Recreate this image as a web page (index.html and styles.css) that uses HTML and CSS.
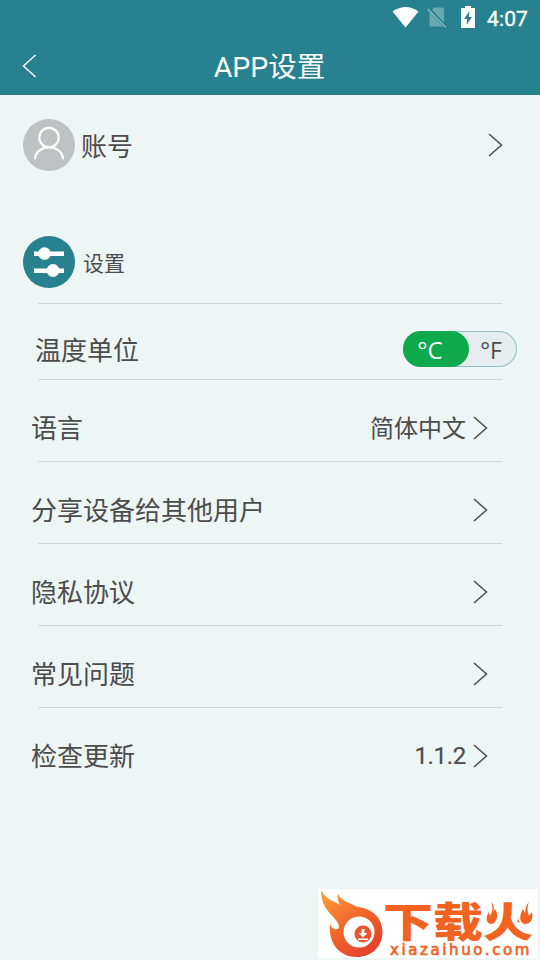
FILE: index.html
```html
<!DOCTYPE html>
<html lang="zh-CN">
<head>
<meta charset="utf-8">
<meta name="viewport" content="width=device-width">
<title>APP设置</title>
<link rel="stylesheet" href="styles.css">
</head>
<body>
<header class="header">
  <div class="status">
    <svg class="wifi" width="27" height="21" viewBox="0 0 27 21"><path d="M0.500 4.500Q13.500-4.500 26.500 4.500L13.500 20.500Z" fill="#fff"/></svg>
    <svg class="sim" width="20" height="21" viewBox="0 0 20 21"><path d="M7 .5h8.500q1.500 0 1.500 1.500V15.500L5 2.800ZM2.500 5L16 19.500H4q-1.500 0-1.500-1.500Z" fill="#69a8b1"/><path d="M0.700 2L19 20.500" stroke="#7fb5bd" stroke-width="1.500"/></svg>
    <svg class="battery" width="14" height="22" viewBox="0 0 14 22"><path d="M4 0h6v2h4v20H0V2h4Z" fill="#fff"/><path d="M8.500 5L3 13h3.200l-.7 6L11 11H7.700Z" fill="#28818f"/></svg>
    <span class="time">4:07</span>
  </div>
  <div class="titlebar">
    <svg class="back" width="15" height="24" viewBox="0 0 15 24"><path d="M13.500 1L1.500 12l12 11" fill="none" stroke="#fff" stroke-width="1.400"/></svg>
    <h1 class="title">APP设置</h1>
  </div>
</header>
<main>
  <section class="account">
    <svg class="badge" width="52" height="52" viewBox="0 0 52 52"><circle cx="26" cy="26" r="26" fill="#bfc2c3"/><g fill="none" stroke="#fff" stroke-width="2.200" stroke-linecap="round"><circle cx="26" cy="18.500" r="9.700"/><path d="M12 39.500C13.500 24.500 38.500 24.500 40 39.500"/></g></svg>
    <span class="label">账号</span>
    <svg class="chevron" width="15" height="24" viewBox="0 0 15 24"><path d="M1 1l12.500 11L1 23"/></svg>
  </section>
  <section class="group">
    <svg class="badge" width="52" height="52" viewBox="0 0 52 52"><circle cx="26" cy="26" r="26" fill="#28818f"/><g fill="#fff"><path d="M11 15.500h30v4.500H11ZM11 32.500h30V37H11Z"/><circle cx="21.500" cy="17.500" r="6.300"/><circle cx="30" cy="34.500" r="6.500"/></g></svg>
    <h2 class="group-title">设置</h2>
  </section>
  <div class="row unit">
    <span class="label">温度单位</span>
    <div class="toggle"><span class="option active">°C</span><span class="option">°F</span></div>
  </div>
  <div class="row">
    <span class="label">语言</span><span class="value">简体中文</span>
    <svg class="chevron" width="15" height="24" viewBox="0 0 15 24"><path d="M1 1l12.500 11L1 23"/></svg>
  </div>
  <div class="row">
    <span class="label">分享设备给其他用户</span>
    <svg class="chevron" width="15" height="24" viewBox="0 0 15 24"><path d="M1 1l12.500 11L1 23"/></svg>
  </div>
  <div class="row">
    <span class="label">隐私协议</span>
    <svg class="chevron" width="15" height="24" viewBox="0 0 15 24"><path d="M1 1l12.500 11L1 23"/></svg>
  </div>
  <div class="row">
    <span class="label">常见问题</span>
    <svg class="chevron" width="15" height="24" viewBox="0 0 15 24"><path d="M1 1l12.500 11L1 23"/></svg>
  </div>
  <div class="row">
    <span class="label">检查更新</span><span class="value version">1.1.2</span>
    <svg class="chevron" width="15" height="24" viewBox="0 0 15 24"><path d="M1 1l12.500 11L1 23"/></svg>
  </div>
</main>
<aside class="watermark">
  <svg class="flame" width="65" height="69" viewBox="0 0 65 69">
    <defs><linearGradient id="fire" x1="0" y1="0" x2=".7" y2="1"><stop offset="0" stop-color="#f9a33a"/><stop offset=".5" stop-color="#f36b2b"/><stop offset="1" stop-color="#e6402b"/></linearGradient></defs>
    <path d="M3 1C8 11 15 11 22 16C20 12 19 9 20 5C24 13 31 13 39 18C54 19 64.500 29 64.500 43C64.500 58 53 68 39 68C22 68 10 55 12 35C14 40 18 42 21 39C22 28 3 25 3 1Z" fill="url(#fire)"/>
    <circle cx="41" cy="43" r="15.500" fill="#fff"/><circle cx="45" cy="45" r="8.500" fill="#e9532d"/>
    <path d="M43.500 40h3v4h3L45 48.500 40.500 44h3ZM40 49.500h10V51H40Z" fill="#fff"/>
  </svg>
  <div class="brand"><span class="brand-name">下载火</span><span class="brand-url">xiazaihuo.com</span></div>
  <svg class="sparks" width="48" height="26" viewBox="0 0 48 26" fill="#f26322" stroke="#fff" stroke-width="4" paint-order="stroke"><path d="M5 2C9 6 8 9 7 12L9 9C13 14 11 24 5 24C-1 23 0 16 3 12L4 16C7 11 7 6 5 2ZM43 2C39 6 40 9 39 13L37 9C33 15 33 23 39 24C46 24 47 17 46 12L43 16C41 11 41 6 43 2Z"/></svg>
</aside>
</body>
</html>
```
FILE: styles.css
```css
* { box-sizing: border-box; }
body {
  margin: 0;
  height: 960px;
  overflow: hidden;
  position: relative;
  background: #eef5f5;
  color: #4c4c4c;
  font-family: Roboto, "Noto Sans CJK SC", sans-serif;
}
svg { display: block; flex: none; }
h1, h2 { margin: 0; font-weight: 400; }
.header { height: 95px; background: #28818f; color: #fff; }
.status {
  height: 35px;
  display: flex;
  align-items: center;
  justify-content: flex-end;
  padding-right: 12px;
}
.wifi { margin-right: 8px; }
.sim { margin-right: 14px; }
.battery { margin: 0 12px 1px 0; }
.time { font-size: 21px; letter-spacing: .1px; -webkit-text-stroke: .35px; line-height: 36px; padding-top: 2px; }
.titlebar { height: 62px; display: grid; grid-template-columns: 60px 1fr 60px; align-items: center; }
.back { margin-left: 22px; }
.title { text-align: center; font-size: 28.5px; line-height: 58px; padding: 4px 1px 0 0; }
.chevron { fill: none; stroke: #4c4c4c; stroke-width: 1.5; }
.label { font-size: 26px; line-height: 40px; padding-top: 3px; margin-right: auto; white-space: nowrap; }
.account { display: flex; align-items: center; height: 100px; padding: 0 37px 0 23px; }
.account .label { margin-left: 6px; }
.group { display: flex; align-items: center; height: 108px; padding: 26px 0 0 23px; }
.group-title { margin: 0 0 0 8px; font-size: 21px; }
.row {
  display: flex;
  align-items: center;
  height: 82px;
  padding: 15px 52px 0 31px;
  background: linear-gradient(#cfd6d8, #cfd6d8) 38px 0 / 464px 1px no-repeat;
}
.unit { height: 76px; padding: 16px 23px 0 35px; }
.value { font-size: 24px; line-height: 40px; padding-top: 3px; margin-right: 7px; }
.version { padding-top: 1px; letter-spacing: -.3px; -webkit-text-stroke: .2px; }
.toggle {
  display: flex;
  width: 114px;
  height: 36px;
  border-radius: 18px;
  background: #e4ecee;
  box-shadow: inset 0 0 0 1px #94bfc7;
}
.option {
  width: 48px;
  padding-right: 4px;
  text-align: center;
  font: 23px/38px "Open Sans", sans-serif;
}
.active {
  width: 66px;
  padding-right: 12px;
  border-radius: 18px;
  background: #0ea84d;
  color: #fff;
  font-size: 24px;
}
.watermark {
  position: absolute;
  left: 318px;
  top: 889px;
  width: 220px;
  height: 69px;
  display: flex;
  background: #fff;
  color: #f26322;
}
.brand { display: flex; flex-direction: column; }
.brand-name {
  height: 54px;
  font: 900 50px/58px "Noto Sans CJK SC", sans-serif;
  transform: translateY(1px) scaleY(.82);
  white-space: nowrap;
}
.brand-url {
  padding-left: 7px;
  font: 15px/14px "DejaVu Sans", sans-serif;
  -webkit-text-stroke: .7px;
  letter-spacing: 2.6px;
}
.sparks { position: absolute; left: 168px; top: 11px; }
```
